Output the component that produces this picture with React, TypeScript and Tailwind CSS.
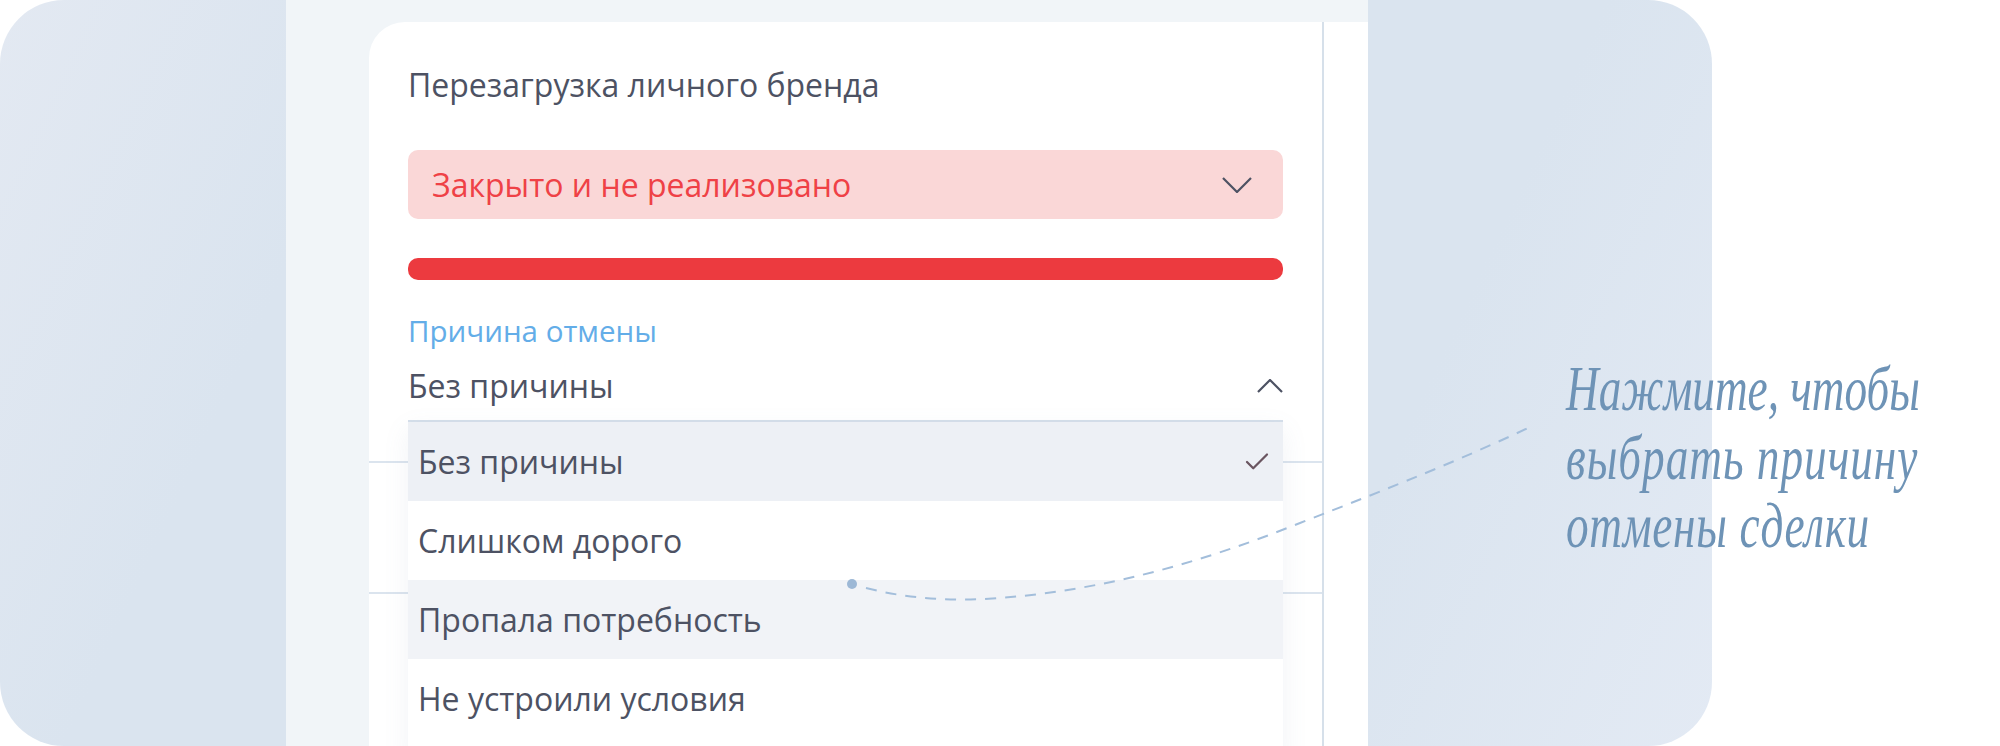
import { Check } from 'lucide-react';

const reasons = [
  { label: 'Без причины', rowClass: 'bg-[#edf0f5]', selected: true },
  { label: 'Слишком дорого', rowClass: 'bg-white', selected: false },
  { label: 'Пропала потребность', rowClass: 'bg-[#f1f3f7]', selected: false },
  { label: 'Не устроили условия', rowClass: 'bg-white', selected: false },
];

export default function App() {
  return (
    <div className="relative h-[746px] w-[2000px] overflow-hidden bg-white font-['Open_Sans',sans-serif] text-[#4d5263]">
      <div className="h-full w-[1712px] overflow-hidden rounded-[64px] bg-[linear-gradient(115deg,#e3e9f2_0%,#dae4ef_20%,#dae4ef_78%,#e3eaf4_100%)] pl-[286px]">
        <div className="h-full w-[1082px] bg-[#f1f5f8] pt-[22px] pl-[83px]">
          <div className="h-full overflow-hidden rounded-tl-[36px] bg-white">
            <div className="relative h-full w-[955px] border-r-2 border-[#d6e0ea] px-[39px] pt-[43px]">
              <h2 className="h-[41px] text-[32px] leading-[40px] font-normal">Перезагрузка личного бренда</h2>

              <div className="mt-[44px] flex h-[69px] items-center justify-between rounded-[10px] bg-[#fad7d7] pr-[31px] pl-[24px] text-[#ef4146]">
                <span className="text-[32px]">Закрыто и не реализовано</span>
                <svg className="h-[16px] w-[30px] text-[#4d5263]" viewBox="0 0 30 16" fill="none" stroke="currentColor" strokeWidth="2.2">
                  <path d="M1 1L15 15L29 1" />
                </svg>
              </div>

              <div className="mt-[39px] h-[22px] rounded-[10px] bg-[#ec3a3f]" />

              <div className="mt-[33px] h-[36px] text-[29.5px] leading-[36px] text-[#63ade8]">Причина отмены</div>
              <div className="flex h-[73px] items-center justify-between border-b-2 border-[#d5dfea] pt-[2px] text-[32px]">
                <span>Без причины</span>
                <svg className="h-[14px] w-[26px]" viewBox="0 0 26 14" fill="none" stroke="currentColor" strokeWidth="2.2">
                  <path d="M1 13L13 1L25 13" />
                </svg>
              </div>

              <div className="-mx-[39px] h-[41px] border-b-2 border-[#dbe4ee]" />
              <div className="-mx-[39px] h-[131px] border-b-2 border-[#dbe4ee]" />

              <div className="absolute top-[400px] left-[39px] w-[875px] bg-white pb-[20px] shadow-[0_8px_24px_rgba(120,140,170,0.10)]">
                {reasons.map((reason) => (
                  <div key={reason.label} className={`flex h-[79px] items-center justify-between pr-[11px] pl-[10px] text-[32px] ${reason.rowClass}`}>
                    <span>{reason.label}</span>
                    {reason.selected && <Check className="h-[30px] w-[30px] text-[#6a5560]" strokeWidth={1.8} />}
                  </div>
                ))}
              </div>
            </div>
          </div>
        </div>
      </div>

      <svg className="absolute top-0 left-0 h-[746px] w-[2000px]" viewBox="0 0 2000 746" fill="none">
        <circle cx="852" cy="584" r="5" fill="#9db8d6" />
        <path d="M866 588C905 598 945 601 985 599C1100 592 1200 563 1300 523C1390 488 1460 460 1528 428" stroke="#a3bedb" strokeWidth="2" strokeDasharray="11 9" />
      </svg>

      <div className="absolute top-[355px] left-[1566px] origin-top-left scale-x-[0.707] font-['Liberation_Serif',serif] text-[64px] leading-[68.5px] font-normal whitespace-nowrap text-[#6e93b6] italic">
        <div>Нажмите, чтобы</div>
        <div className="tracking-[1.4px]">выбрать причину</div>
        <div className="tracking-[1px]">отмены сделки</div>
      </div>
    </div>
  );
}
